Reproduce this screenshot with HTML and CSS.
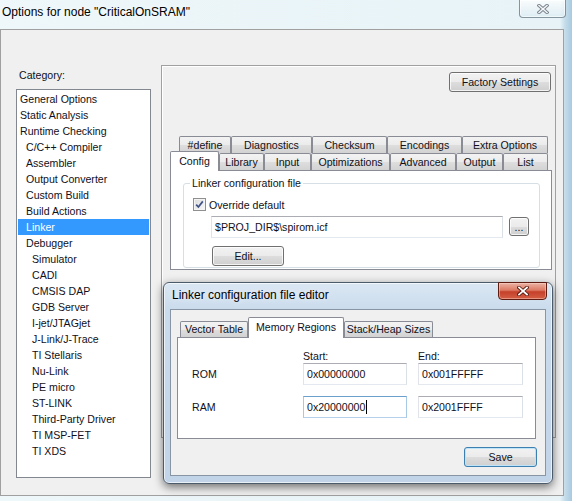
FILE: index.html
```html
<!DOCTYPE html>
<html lang="en">
<head>
    <meta charset="UTF-8">
    <title>Options for node "CriticalOnSRAM"</title>
    <link rel="stylesheet" href="styles.css">
</head>
<body>
    <div class="titlebar">
        <span class="title">Options for node "CriticalOnSRAM"</span>
        <div class="caption-close">
            <svg width="12" height="10" viewBox="0 0 12 10">
                <path d="M2 1.5 L10 8.5 M10 1.5 L2 8.5" stroke="#7a848e" stroke-width="3.4" stroke-linecap="square"/>
                <path d="M2 1.5 L10 8.5 M10 1.5 L2 8.5" stroke="#f5f7f9" stroke-width="1.5" stroke-linecap="square"/>
            </svg>
        </div>
    </div>

    <div class="client">
        <div class="category">
            <div class="category-label">Category:</div>
            <ul class="category-list">
                <li>General Options</li>
                <li>Static Analysis</li>
                <li>Runtime Checking</li>
                <li class="l1">C/C++ Compiler</li>
                <li class="l1">Assembler</li>
                <li class="l1">Output Converter</li>
                <li class="l1">Custom Build</li>
                <li class="l1">Build Actions</li>
                <li class="l1 selected">Linker</li>
                <li class="l1">Debugger</li>
                <li class="l2">Simulator</li>
                <li class="l2">CADI</li>
                <li class="l2">CMSIS DAP</li>
                <li class="l2">GDB Server</li>
                <li class="l2">I-jet/JTAGjet</li>
                <li class="l2">J-Link/J-Trace</li>
                <li class="l2">TI Stellaris</li>
                <li class="l2">Nu-Link</li>
                <li class="l2">PE micro</li>
                <li class="l2">ST-LINK</li>
                <li class="l2">Third-Party Driver</li>
                <li class="l2">TI MSP-FET</li>
                <li class="l2">TI XDS</li>
            </ul>
        </div>

        <div class="options-panel">
            <div class="panel-top">
                <button class="btn factory-btn">Factory Settings</button>
            </div>
            <div class="tabs">
                <div class="tab-row back-row">
                    <div class="tab t-define">#define</div>
                    <div class="tab t-diag">Diagnostics</div>
                    <div class="tab t-check">Checksum</div>
                    <div class="tab t-enc">Encodings</div>
                    <div class="tab t-extra">Extra Options</div>
                </div>
                <div class="tab-row front-row">
                    <div class="tab active t-config">Config</div>
                    <div class="tab t-lib">Library</div>
                    <div class="tab t-input">Input</div>
                    <div class="tab t-opt">Optimizations</div>
                    <div class="tab t-adv">Advanced</div>
                    <div class="tab t-output">Output</div>
                    <div class="tab t-list">List</div>
                </div>
                <div class="tab-page">
                    <fieldset class="group">
                        <legend>Linker configuration file</legend>
                        <div class="check-row">
                            <span class="checkbox">
                                <svg width="11" height="11" viewBox="0 0 11 11">
                                    <path d="M2.2 5.6 L4.4 8 L8.8 2.4" fill="none" stroke="#3f5187" stroke-width="1.7"/>
                                </svg>
                            </span>
                            <span>Override default</span>
                        </div>
                        <div class="file-row">
                            <div class="textbox file-box">$PROJ_DIR$\spirom.icf</div>
                            <button class="btn browse-btn">...</button>
                        </div>
                        <button class="btn edit-btn">Edit...</button>
                    </fieldset>
                </div>
            </div>
        </div>

        <div class="dialog">
            <div class="dialog-titlebar">
                <span class="dialog-title">Linker configuration file editor</span>
                <div class="dialog-close">
                    <svg width="12" height="10" viewBox="0 0 12 10">
                        <path d="M2 1.5 L10 8.5 M10 1.5 L2 8.5" stroke="#5a1d12" stroke-width="3.6" stroke-linecap="square"/>
                        <path d="M2 1.5 L10 8.5 M10 1.5 L2 8.5" stroke="#ffffff" stroke-width="1.7" stroke-linecap="square"/>
                    </svg>
                </div>
            </div>
            <div class="dialog-body">
                <div class="dlg-tabs">
                    <div class="tab-row dlg-row">
                        <div class="tab dt-vector">Vector Table</div>
                        <div class="tab active dt-memory">Memory Regions</div>
                        <div class="tab dt-stack">Stack/Heap Sizes</div>
                    </div>
                    <div class="dlg-page">
                        <div class="mem-line mem-head">
                            <span></span>
                            <span>Start:</span>
                            <span>End:</span>
                        </div>
                        <div class="mem-line mem-row">
                            <span>ROM</span>
                            <div class="textbox mem-box">0x00000000</div>
                            <div class="textbox mem-box">0x001FFFFF</div>
                        </div>
                        <div class="mem-line mem-row ram">
                            <span>RAM</span>
                            <div class="textbox mem-box focus">0x20000000<span class="caret"></span></div>
                            <div class="textbox mem-box">0x2001FFFF</div>
                        </div>
                    </div>
                </div>
                <div class="dlg-footer">
                    <button class="btn default-btn save-btn">Save</button>
                </div>
            </div>
        </div>
    </div>
</body>
</html>
```

FILE: styles.css
```css
body {
    margin: 0;
    width: 572px;
    height: 501px;
    overflow: hidden;
    font-family: "Liberation Sans", Arial, sans-serif;
    font-size: 10.6px;
    color: #101020;
    background: linear-gradient(90deg, #eef7fa 0, #e7f3f7 560px, #c4dcea 565px, #a8cae0 572px);
}

.titlebar {
    display: flex;
    justify-content: space-between;
    align-items: flex-start;
    height: 29px;
}

.title {
    padding: 5px 0 0 2px;
    font-size: 12px;
    line-height: 15px;
    color: #000;
    text-shadow: 0 0 6px #fff;
}

.caption-close {
    box-sizing: border-box;
    width: 47px;
    height: 18px;
    margin-right: 6px;
    border: 1px solid rgba(95, 115, 130, 0.75);
    border-top: none;
    border-radius: 0 0 4px 4px;
    background: linear-gradient(rgba(255, 255, 255, 0.75), rgba(218, 234, 241, 0.7));
    box-shadow: inset 0 0 0 1px rgba(255, 255, 255, 0.6);
    display: flex;
    align-items: center;
    justify-content: center;
}

.client {
    position: relative;
    box-sizing: border-box;
    width: 564px;
    height: 467px;
    border: 1px solid #a0a0a0;
    background: #f0f0f0;
    display: flex;
    align-items: flex-start;
    gap: 10px;
    padding: 35px 0 0 15px;
}

/* category list */

.category {
    width: 135px;
    display: flex;
    flex-direction: column;
}

.category-label {
    margin-top: 4px;
    padding-left: 3px;
    line-height: 13px;
}

.category-list {
    box-sizing: border-box;
    height: 389px;
    margin: 7px 0 0;
    padding: 1px;
    list-style: none;
    border: 1px solid #828790;
    background: #fff;
}

.category-list li {
    height: 16px;
    line-height: 16px;
    padding-left: 2px;
    white-space: nowrap;
}

.category-list li.l1 {
    padding-left: 8px;
}

.category-list li.l2 {
    padding-left: 14px;
}

.category-list li.selected {
    background: #3399ff;
    color: #fff;
}

/* options panel */

.options-panel {
    box-sizing: border-box;
    width: 395px;
    height: 373px;
    border: 1px solid #a0a0a0;
    box-shadow: inset 1px 1px 0 #fff;
}

.panel-top {
    box-sizing: border-box;
    height: 70px;
    display: flex;
    justify-content: flex-end;
    align-items: flex-start;
    padding: 6px 4px 0 0;
}

.btn {
    box-sizing: border-box;
    padding: 0;
    font-family: "Liberation Sans", Arial, sans-serif;
    font-size: 10.6px;
    color: #101020;
    border: 1px solid #707070;
    border-radius: 3px;
    background: linear-gradient(#f2f2f2 0%, #ebebeb 50%, #dddddd 51%, #cfcfcf 100%);
    box-shadow: inset 0 0 0 1px rgba(255, 255, 255, 0.75);
}

.factory-btn {
    width: 102px;
    height: 20px;
}

.tabs {
    margin-left: 8px;
    width: 382px;
}

.tab-row {
    display: flex;
    align-items: flex-end;
    height: 17px;
}

.back-row {
    padding-left: 9px;
}

.front-row {
    border-bottom: 1px solid #898c95;
}

.tab {
    box-sizing: border-box;
    height: 17px;
    border: 1px solid #898c95;
    border-bottom: none;
    border-radius: 2px 2px 0 0;
    background: linear-gradient(#f3f3f3 0%, #ebebeb 50%, #dedede 51%, #d2d2d2 100%);
    text-align: center;
    line-height: 16px;
    white-space: nowrap;
}

.tab.active {
    position: relative;
    height: 20px;
    margin-bottom: -1px;
    background: #fff;
    line-height: 18px;
}

.t-define { width: 52px; }
.t-diag { width: 81px; }
.t-check { width: 75px; }
.t-enc { width: 75px; }
.t-extra { width: 86px; }
.t-config { width: 49px; }
.t-lib { width: 45px; }
.t-input { width: 47px; }
.t-opt { width: 79px; }
.t-adv { width: 66px; }
.t-output { width: 47px; }
.t-list { width: 45px; }

.tab-page {
    box-sizing: border-box;
    height: 99px;
    padding: 6px 0 0 12px;
    border: 1px solid #898c95;
    border-top: none;
    background: #fff;
}

.group {
    box-sizing: border-box;
    width: 357px;
    margin: 0;
    padding: 0 0 1px 6px;
    border: 1px solid #d5dfe5;
    border-radius: 3px;
}

.group legend {
    padding: 0 2px;
    line-height: 13px;
}

.check-row {
    display: flex;
    align-items: center;
    gap: 3px;
    height: 13px;
    margin: 8px 0 0 3px;
}

.checkbox {
    box-sizing: border-box;
    width: 13px;
    height: 13px;
    border: 1px solid #8e8f8f;
    background: linear-gradient(135deg, #dcdcdc, #f8f8f8);
    box-shadow: inset 0 0 0 1px #f4f4f4;
    display: flex;
    align-items: center;
    justify-content: center;
}

.file-row {
    display: flex;
    align-items: flex-start;
    gap: 6px;
    margin: 5px 0 0 21px;
}

.textbox {
    box-sizing: border-box;
    height: 22px;
    padding: 0 3px;
    line-height: 20px;
    border: 1px solid;
    border-color: #abadb3 #dbdfe6 #e3e9ef #e2e3ea;
    background: #fff;
    white-space: nowrap;
}

.file-box {
    width: 292px;
}

.browse-btn {
    width: 20px;
    height: 19px;
    margin-top: 1px;
}

.edit-btn {
    display: block;
    width: 72px;
    height: 20px;
    margin: 8px 0 0 22px;
}

/* linker configuration file editor */

.dialog {
    position: absolute;
    left: 162px;
    top: 252px;
    box-sizing: border-box;
    width: 390px;
    height: 202px;
    border: 1px solid #4b5b6c;
    border-radius: 6px;
    background: linear-gradient(#dbe7f3 0, #c9dbec 28px, #c1d4e8 100%);
    box-shadow: 0 3px 10px rgba(0, 0, 0, 0.55), inset 0 0 0 1px rgba(255, 255, 255, 0.65);
}

.dialog-titlebar {
    display: flex;
    justify-content: space-between;
    align-items: flex-start;
    height: 26px;
}

.dialog-title {
    padding: 5px 0 0 8px;
    font-size: 12px;
    line-height: 15px;
    color: #000;
    text-shadow: 0 0 6px rgba(255, 255, 255, 0.9);
}

.dialog-close {
    box-sizing: border-box;
    width: 49px;
    height: 18px;
    margin: -1px 5px 0 0;
    border: 1px solid #5e1c10;
    border-radius: 0 0 4px 4px;
    background: linear-gradient(#ebb3a5 0%, #dc7a63 45%, #c5402a 55%, #d45e44 100%);
    box-shadow: inset 0 0 0 1px rgba(255, 220, 210, 0.45);
    display: flex;
    align-items: center;
    justify-content: center;
}

.dialog-body {
    box-sizing: border-box;
    height: 167px;
    margin: 0 6px;
    border: 1px solid #8795a4;
    background: #f0f0f0;
}

.dlg-tabs {
    width: 359px;
    margin: 11px 0 0 6px;
}

.dlg-row {
    height: 16px;
    padding-left: 3px;
    border-bottom: 1px solid #898c95;
}

.dlg-row .tab {
    height: 16px;
    line-height: 15px;
}

.dlg-row .tab.active {
    height: 21px;
    line-height: 19px;
}

.dt-vector { width: 68px; }
.dt-memory { width: 96px; }
.dt-stack { width: 89px; }

.dlg-page {
    box-sizing: border-box;
    height: 101px;
    padding: 12px 0 0 14px;
    border: 1px solid #898c95;
    border-top: none;
    background: #fff;
}

.mem-line {
    display: grid;
    grid-template-columns: 111px 115px 105px;
    align-items: center;
}

.mem-head {
    line-height: 13px;
}

.mem-row {
    height: 22px;
}

.mem-row.ram {
    margin-top: 11px;
}

.mem-box {
    width: 104px;
}

.mem-row .mem-box:last-child {
    width: 105px;
}

.mem-box.focus {
    border-color: #6d9fce #a9c8e6 #b5d0ea #a9c8e6;
}

.caret {
    display: inline-block;
    width: 1px;
    height: 14px;
    margin-left: 1px;
    background: #000;
    vertical-align: -3px;
}

.dlg-footer {
    display: flex;
    justify-content: flex-end;
    padding: 8px 8px 0 0;
}

.save-btn {
    width: 73px;
    height: 20px;
}

.default-btn {
    border-color: #3c7fb1;
    box-shadow: inset 0 0 0 1px #bfe3f7;
}
```
